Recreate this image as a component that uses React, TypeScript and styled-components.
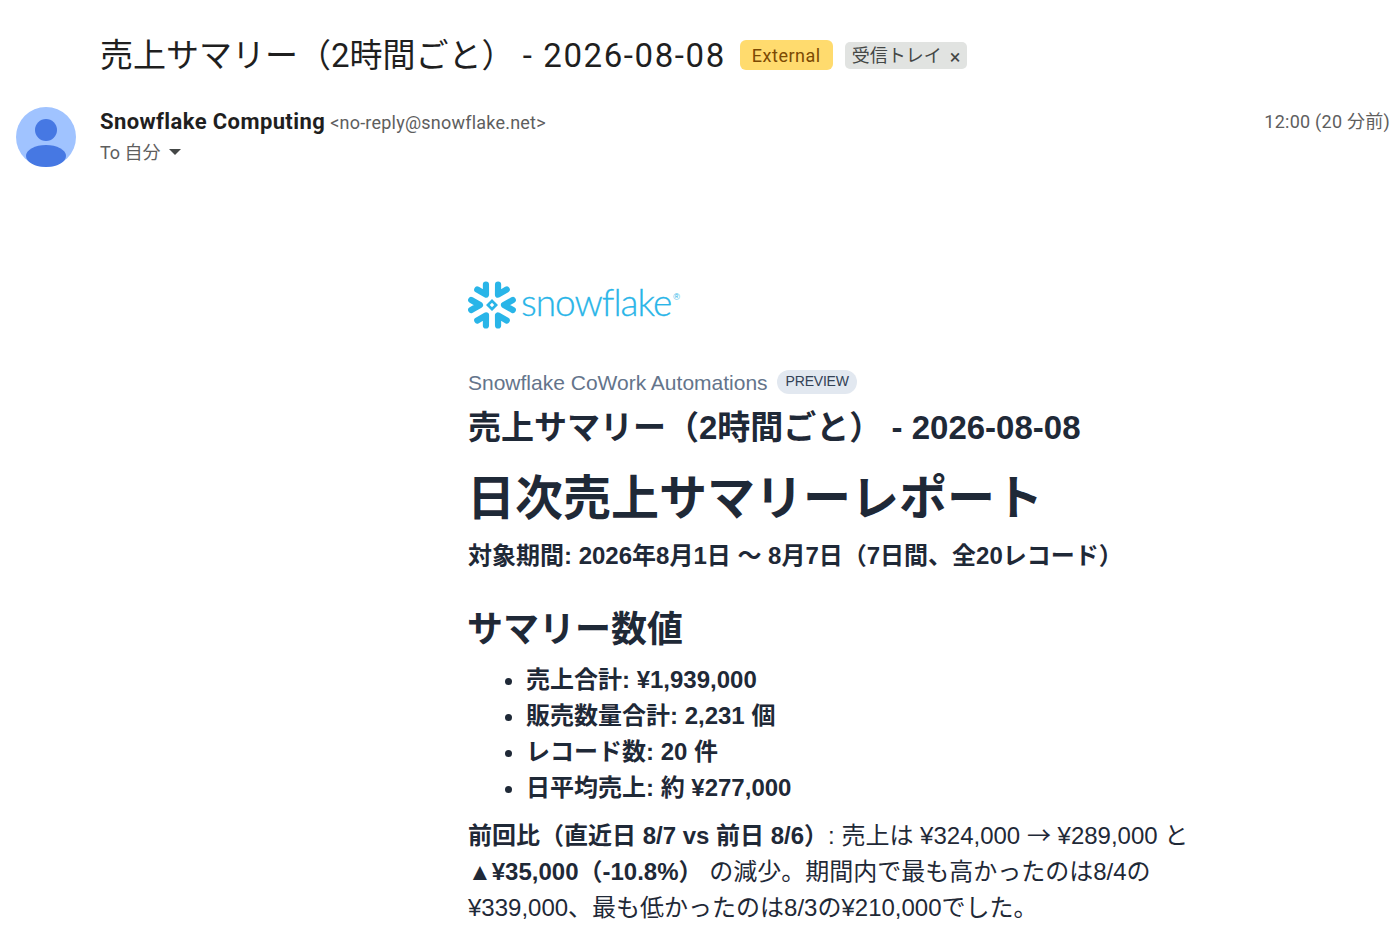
import styled, { createGlobalStyle } from "styled-components";

const GlobalStyle = createGlobalStyle`
  html, body {
    margin: 0;
    padding: 0;
    background: #fff;
    overflow: hidden;
  }
  body {
    font-family: Roboto, "Noto Sans CJK JP", sans-serif;
  }
`;

const Page = styled.div`
  width: 1394px;
  height: 940px;
  overflow: hidden;
`;

const SubjectRow = styled.div`
  display: flex;
  align-items: center;
  height: 46px;
  padding: 32px 0 0 100px;
`;

const Subject = styled.h2`
  margin: 1px 0 0;
  font-size: 33px;
  font-weight: 400;
  line-height: 46px;
  color: #1f1f1f;
  white-space: pre;
`;

const SubjectDate = styled.span`
  letter-spacing: 1.6px;
`;

const ExternalTag = styled.span`
  margin-left: 14px;
  height: 30px;
  padding: 0 12px;
  display: flex;
  align-items: center;
  border-radius: 6px;
  background: #ffdb6e;
  color: #7c4a03;
  font-size: 18px;
  letter-spacing: 0.5px;
`;

const LabelTag = styled.span`
  margin-left: 12px;
  height: 27px;
  padding: 0 7px 2px;
  box-sizing: border-box;
  display: flex;
  align-items: center;
  gap: 8px;
  border-radius: 5px;
  background: #e1e3e1;
  color: #444746;
  font-size: 18px;
`;

const LabelClose = styled.span`
  font-size: 20px;
  line-height: 20px;
  margin-top: 5px;
`;

const SenderRow = styled.div`
  display: flex;
  margin-top: 29px;
  padding: 0 4px 0 16px;
`;

const Avatar = styled.svg`
  width: 60px;
  height: 60px;
  flex: none;
`;

const SenderInfo = styled.div`
  flex: 1;
  margin-left: 24px;
`;

const SenderLine = styled.div`
  display: flex;
  align-items: baseline;
  height: 30px;
  line-height: 30px;
`;

const SenderName = styled.span`
  font-size: 22px;
  font-weight: 700;
  color: #1f1f1f;
  letter-spacing: 0.4px;
`;

const SenderMail = styled.span`
  margin-left: 5px;
  font-size: 18px;
  color: #5e5e5e;
  letter-spacing: 0.22px;
`;

const ToLine = styled.div`
  display: flex;
  align-items: center;
  height: 27px;
  font-size: 18px;
  color: #5e5e5e;
`;

const Caret = styled.span`
  margin: 2px 0 0 8px;
  border-left: 6px solid transparent;
  border-right: 6px solid transparent;
  border-top: 6px solid #444746;
`;

const SentAt = styled.div`
  font-size: 18px;
  line-height: 30px;
  letter-spacing: 0.25px;
  color: #5e5e5e;
`;

const Mail = styled.div`
  width: 730px;
  margin: 113px 0 0 468px;
  font-family: "Liberation Sans", "Noto Sans CJK JP", sans-serif;
  color: #1f2937;
  font-size: 24px;
  line-height: 36px;
`;

const Logo = styled.div`
  display: flex;
  align-items: center;
  height: 50px;
  margin-left: -1px;
`;

const LogoMark = styled.svg`
  width: 50px;
  height: 50px;
  flex: none;
`;

const LogoWord = styled.span`
  margin: -6px 0 0 4px;
  font-family: Lato, sans-serif;
  font-size: 37px;
  font-weight: 300;
  line-height: 50px;
  letter-spacing: -1px;
  -webkit-text-stroke: 0.3px #29b5e8;
  color: #29b5e8;
`;

const LogoMarkR = styled.sup`
  font-size: 9px;
  line-height: 9px;
  margin: -16px 0 0 2px;
  color: #29b5e8;
  font-family: "Liberation Sans", sans-serif;
`;

const Eyebrow = styled.div`
  display: flex;
  align-items: center;
  margin-top: 38px;
  height: 30px;
  font-size: 21px;
  color: #64748b;
`;

const PreviewPill = styled.span`
  margin: -2px 0 0 9px;
  height: 24px;
  padding: 0 8px 2px 9px;
  box-sizing: border-box;
  display: flex;
  align-items: center;
  border-radius: 12px;
  background: #e2e8f0;
  color: #334155;
  font-size: 14px;
  letter-spacing: -0.2px;
`;

const MailTitle = styled.div`
  margin-top: 8px;
  font-size: 33px;
  line-height: 44px;
  font-weight: 700;
  white-space: pre;
`;

const ReportTitle = styled.h1`
  margin: 15px 0 0 -1px;
  font-size: 48px;
  line-height: 68px;
  font-weight: 700;
`;

const Period = styled.p`
  margin: 5px 0 0;
  font-weight: 700;
`;

const SectionTitle = styled.h3`
  margin: 29px 0 0 -1px;
  font-size: 36px;
  line-height: 54px;
  font-weight: 700;
`;

const Stats = styled.ul`
  margin: 5px 0 0;
  padding: 0 0 0 58px;
`;

const Stat = styled.li`
  font-weight: 700;
  line-height: 36px;
`;

const Note = styled.p`
  margin: 10px 0 0;
`;

const Arrow = styled.span`
  font-family: "Noto Sans CJK JP", sans-serif;
`;

const flakeArms = [30, 90, 150, 210, 270, 330];

export default function App() {
  return (
    <Page>
      <GlobalStyle />
      <SubjectRow>
        <Subject>
          売上サマリー（2時間ごと） <SubjectDate>- 2026-08-08</SubjectDate>
        </Subject>
        <ExternalTag>External</ExternalTag>
        <LabelTag>
          受信トレイ
          <LabelClose>×</LabelClose>
        </LabelTag>
      </SubjectRow>
      <SenderRow>
        <Avatar viewBox="0 0 60 60">
          <circle cx="30" cy="30" r="30" fill="#a0c3ff" />
          <circle cx="30" cy="23" r="11" fill="#4678e3" />
          <ellipse cx="30" cy="49" rx="20" ry="11" fill="#4678e3" />
        </Avatar>
        <SenderInfo>
          <SenderLine>
            <SenderName>Snowflake Computing</SenderName>
            <SenderMail>&lt;no-reply@snowflake.net&gt;</SenderMail>
          </SenderLine>
          <ToLine>
            To 自分
            <Caret />
          </ToLine>
        </SenderInfo>
        <SentAt>12:00 (20 分前)</SentAt>
      </SenderRow>
      <Mail>
        <Logo>
          <LogoMark viewBox="0 0 50 50">
            {flakeArms.map((deg) => (
              <path
                key={deg}
                transform={`rotate(${deg} 25 25)`}
                d="M20 4.2 L25 13 L30 4.2"
                stroke="#29b5e8"
                strokeWidth="6.2"
                strokeLinecap="round"
                strokeLinejoin="round"
                fill="none"
              />
            ))}
            <path
              d="M25 19 L31 25 L25 31 L19 25 Z M25 22.8 L22.8 25 L25 27.2 L27.2 25 Z"
              fill="#29b5e8"
              fillRule="evenodd"
            />
          </LogoMark>
          <LogoWord>snowflake</LogoWord>
          <LogoMarkR>®</LogoMarkR>
        </Logo>
        <Eyebrow>
          Snowflake CoWork Automations
          <PreviewPill>PREVIEW</PreviewPill>
        </Eyebrow>
        <MailTitle>売上サマリー（2時間ごと） - 2026-08-08</MailTitle>
        <ReportTitle>日次売上サマリーレポート</ReportTitle>
        <Period>対象期間: 2026年8月1日 ～ 8月7日（7日間、全20レコード）</Period>
        <SectionTitle>サマリー数値</SectionTitle>
        <Stats>
          <Stat>売上合計: ¥1,939,000</Stat>
          <Stat>販売数量合計: 2,231 個</Stat>
          <Stat>レコード数: 20 件</Stat>
          <Stat>日平均売上: 約 ¥277,000</Stat>
        </Stats>
        <Note>
          <strong>前回比（直近日 8/7 vs 前日 8/6）</strong>: 売上は ¥324,000 <Arrow>→</Arrow> ¥289,000 と{" "}
          <strong>▲¥35,000（-10.8%）</strong> の減少。期間内で最も高かったのは8/4の¥339,000、最も低かったのは8/3の¥210,000でした。
        </Note>
      </Mail>
    </Page>
  );
}
